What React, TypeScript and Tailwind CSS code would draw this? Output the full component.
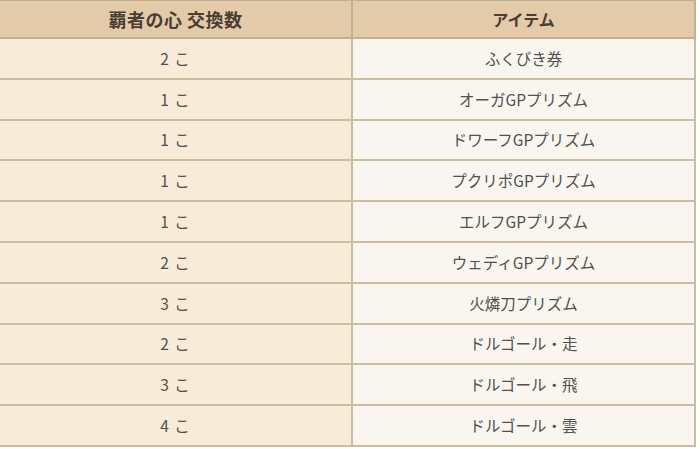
import React from "react";

const rows: [string, string][] = [
  ["2 こ", "ふくびき券"],
  ["1 こ", "オーガGPプリズム"],
  ["1 こ", "ドワーフGPプリズム"],
  ["1 こ", "プクリポGPプリズム"],
  ["1 こ", "エルフGPプリズム"],
  ["2 こ", "ウェディGPプリズム"],
  ["3 こ", "火燐刀プリズム"],
  ["2 こ", "ドルゴール・走"],
  ["3 こ", "ドルゴール・飛"],
  ["4 こ", "ドルゴール・雲"],
];

export default function App() {
  return (
    <div
      className="w-[700px] h-[449px] bg-white overflow-hidden"
      style={{ fontFamily: '"Noto Sans CJK JP", "Noto Sans", sans-serif' }}
    >
      <table className="w-[698px] border-collapse -ml-[2px] -mt-[1px] text-[15.5px] text-[#505050]">
        <thead>
          <tr className="h-[38px] bg-[#e3caa9]">
            <th className="w-[353px] border-2 border-[#c3b08f] font-bold text-[18px] tracking-[0.5px] text-[#4a3e33]">
              覇者の心 交換数
            </th>
            <th className="border-2 border-[#c3b08f] font-bold text-[16px] text-[#4a3e33]">アイテム</th>
          </tr>
        </thead>
        <tbody>
          {rows.map(([a, b], i) => (
            <tr key={i} className="h-[40.8px]">
              <td className="bg-[#f8ecd9] border-2 border-[#cdbd9f] text-center tracking-[1px]">{a}</td>
              <td className="bg-[#f8f6ef] border-2 border-[#cdbd9f] text-center">{b}</td>
            </tr>
          ))}
        </tbody>
      </table>
    </div>
  );
}
